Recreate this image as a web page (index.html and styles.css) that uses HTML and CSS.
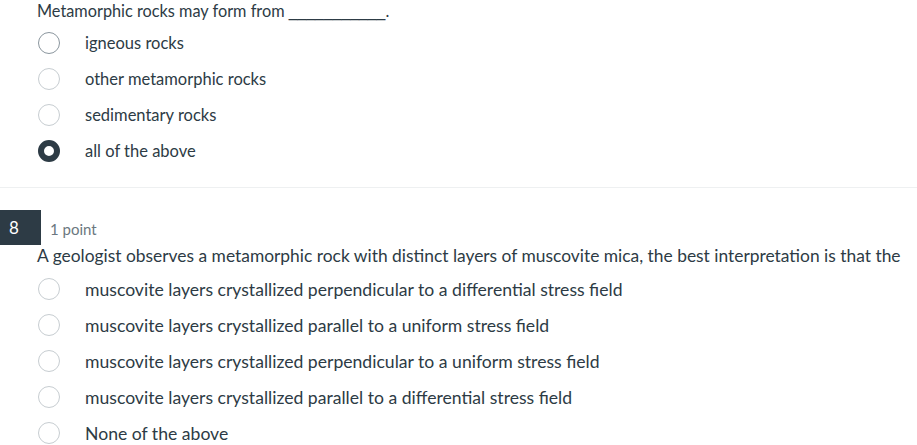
FILE: index.html
```html
<!DOCTYPE html>
<html>
<head>
<meta charset="utf-8">
<link rel="stylesheet" href="styles.css">
</head>
<body>
<div class="quiz">
  <section class="question first">
    <p class="qtext">Metamorphic rocks may form from <span class="blank">___________</span>.</p>
    <ul class="options">
      <li class="option"><span class="radio hover"></span><span class="label">igneous rocks</span></li>
      <li class="option"><span class="radio"></span><span class="label">other metamorphic rocks</span></li>
      <li class="option"><span class="radio"></span><span class="label">sedimentary rocks</span></li>
      <li class="option"><span class="radio checked"></span><span class="label">all of the above</span></li>
    </ul>
  </section>
  <hr class="sep">
  <section class="question second">
    <div class="qhead">
      <span class="num">8</span>
      <span class="points">1 point</span>
    </div>
    <p class="qtext2">A geologist observes a metamorphic rock with distinct layers of muscovite mica, the best interpretation is that the</p>
    <ul class="options">
      <li class="option"><span class="radio"></span><span class="label">muscovite layers crystallized perpendicular to a differential stress field</span></li>
      <li class="option"><span class="radio"></span><span class="label">muscovite layers crystallized parallel to a uniform stress field</span></li>
      <li class="option"><span class="radio"></span><span class="label">muscovite layers crystallized perpendicular to a uniform stress field</span></li>
      <li class="option"><span class="radio"></span><span class="label">muscovite layers crystallized parallel to a differential stress field</span></li>
      <li class="option"><span class="radio"></span><span class="label">None of the above</span></li>
    </ul>
  </section>
</div>
</body>
</html>
```

FILE: styles.css
```css
html, body {
  margin: 0;
  padding: 0;
  background: #fff;
}
body {
  font-family: Lato, "Open Sans", sans-serif;
  color: #2d3b45;
  width: 917px;
  height: 445px;
  overflow: hidden;
}
.quiz {
  display: flex;
  flex-direction: column;
}
.question.first {
  padding-left: 37px;
}
.qtext {
  margin: 0;
  font-size: 16.3px;
  line-height: 22px;
  height: 25px;
}
.blank {
  font-family: "Liberation Sans", sans-serif;
  font-size: 15.8px;
}
.options {
  list-style: none;
  margin: 0;
  padding: 0;
}
.option {
  height: 36px;
  display: flex;
  align-items: center;
  font-size: 16.5px;
}
.question.second .option {
  font-size: 17.6px;
}
.radio {
  box-sizing: border-box;
  width: 22px;
  height: 22px;
  border-radius: 50%;
  border: 1px solid #c7cdd1;
  margin-left: 1px;
  margin-right: 25px;
  flex: none;
  background: #fff;
}
.radio.hover {
  border-color: #8b969e;
}
.radio.checked {
  border: 6px solid #2d3b45;
}
.sep {
  border: 0;
  border-top: 1px solid #eef0f1;
  margin: 18px 0 22px 0;
  height: 0;
}
.question.second .options {
  padding-left: 37px;
}
.qhead {
  display: flex;
  align-items: center;
  height: 35px;
}
.num {
  width: 41px;
  height: 35px;
  background: #2d3b45;
  color: #fff;
  font-size: 17px;
  display: flex;
  align-items: center;
  padding-left: 9px;
  box-sizing: border-box;
}
.points {
  margin-left: 9px;
  font-size: 15px;
  color: #6b7780;
  padding-top: 2px;
}
.qtext2 {
  margin: 0;
  padding-left: 37px;
  font-size: 17.4px;
  line-height: 22px;
  height: 26px;
}
```
